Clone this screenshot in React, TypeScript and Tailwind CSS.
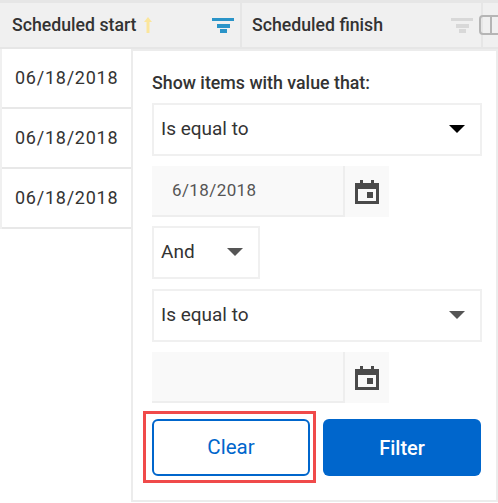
function FilterIcon({ color }: { color: string }) {
  return (
    <svg width="22" height="15" viewBox="0 0 22 15" fill={color}>
      <rect x="0" y="0" width="22" height="3" />
      <rect x="5" y="6" width="13" height="4" />
      <rect x="8" y="11" width="7" height="4" />
    </svg>
  );
}

function CalendarIcon() {
  return (
    <svg width="24" height="24" viewBox="0 0 24 24" fill="#4a4a4a">
      <path fillRule="evenodd" d="M5 0h3v3h8V0h3v3h5v21H0V3h5V0zM3 9v12h18V9H3z" />
      <rect x="12" y="12" width="6" height="6" />
    </svg>
  );
}

function SelectBox({ label, arrow, width }: { label: string; arrow: string; width: string }) {
  return (
    <div className={`flex h-[53px] items-center justify-between border-2 border-[#f0f0f0] bg-white pb-px pl-[7px] pr-[15px] text-[19px] text-[#333] ${width}`}>
      <span>{label}</span>
      <span className={`h-0 w-0 border-x-[8px] border-t-[8px] border-x-transparent ${arrow}`} />
    </div>
  );
}

function DateField({ value }: { value: string }) {
  return (
    <div className="flex h-[51px] w-[237px]">
      <div className="flex h-full w-[193px] items-center border-r-2 border-b-2 border-[#eeeeee] bg-[#f9f9f9] pl-5 text-[17px] tracking-[0.4px] text-[#555]">
        {value}
      </div>
      <div className="flex flex-1 items-center justify-center bg-[#f9f9f9]">
        <CalendarIcon />
      </div>
    </div>
  );
}

const rows = ["06/18/2018", "06/18/2018", "06/18/2018"];

export default function App() {
  return (
    <div className="relative h-[503px] w-[498px] overflow-hidden bg-white font-['Roboto',sans-serif]">
      {/* Header */}
      <div className="flex h-[49px] border-t-[3px] border-b-2 border-[#e6e6e6] bg-[#f0f0f0] pl-[2px] text-[17.7px] font-medium text-[#333]">
        <div className="flex w-[240px] items-center justify-between border-r-2 border-[#e6e6e6] pl-[10px] pr-[6px]">
          <span className="flex items-center gap-[7px]">
            Scheduled start
            <svg width="8" height="16" viewBox="0 0 8 16" fill="#fbe69c">
              <path d="M4 0l4 5H5.5v11h-3V5H0z" />
            </svg>
          </span>
          <FilterIcon color="#2a94c8" />
        </div>
        <div className="flex w-[241px] items-center justify-between border-r-2 border-[#e6e6e6] pl-[10px] pr-[8px]">
          <span>Scheduled finish</span>
          <FilterIcon color="#d8d8d8" />
        </div>
      </div>

      {/* Rows */}
      <div className="w-[132px] border-l-2 border-[#f0f0f0]">
        {rows.map((date, i) => (
          <div key={i} className="flex h-[60px] items-center border-b-2 border-[#e8e8e8] pb-[2px] pl-[13px] text-[18px] tracking-[0.75px] text-[#333]">
            {date}
          </div>
        ))}
      </div>

      {/* Column picker peeking from behind the popover */}
      <div className="absolute left-[479px] top-[15px] h-[20px] w-[30px] rounded-sm border-2 border-[#b5b5b5]">
        <div className="ml-[9px] h-full w-[2px] bg-[#b5b5b5]" />
      </div>

      {/* Filter popover */}
      <div className="absolute left-[131px] top-[49px] h-[453px] w-[367px] border-2 border-[#ececec] bg-white pl-[19px] pr-[15px] pt-5">
        <div className="mb-[9px] text-[17.8px] font-medium leading-[23px] text-[#333]">Show items with value that:</div>
        <div className="flex flex-col gap-[10px]">
          <SelectBox label="Is equal to" arrow="border-t-black" width="w-[330px]" />
          <div className="-mb-px">
            <DateField value="6/18/2018" />
          </div>
          <SelectBox label="And" arrow="border-t-[#555]" width="w-[108px]" />
          <SelectBox label="Is equal to" arrow="border-t-[#555]" width="w-[330px]" />
          <DateField value="" />
        </div>
        <div className="mt-4 flex gap-[13px]">
          <div className="relative">
            <button className="h-[57px] w-[158px] rounded-md border-2 border-[#0066cc] bg-white text-[20.5px] text-[#0066cc]">Clear</button>
            <div className="absolute -bottom-[7px] -left-[9px] -right-[6px] -top-2 border-[3px] border-[#f04a4a]" />
          </div>
          <button className="h-[57px] w-[158px] rounded-md bg-[#0066cc] text-[20px] font-medium text-white">Filter</button>
        </div>
      </div>
    </div>
  );
}
